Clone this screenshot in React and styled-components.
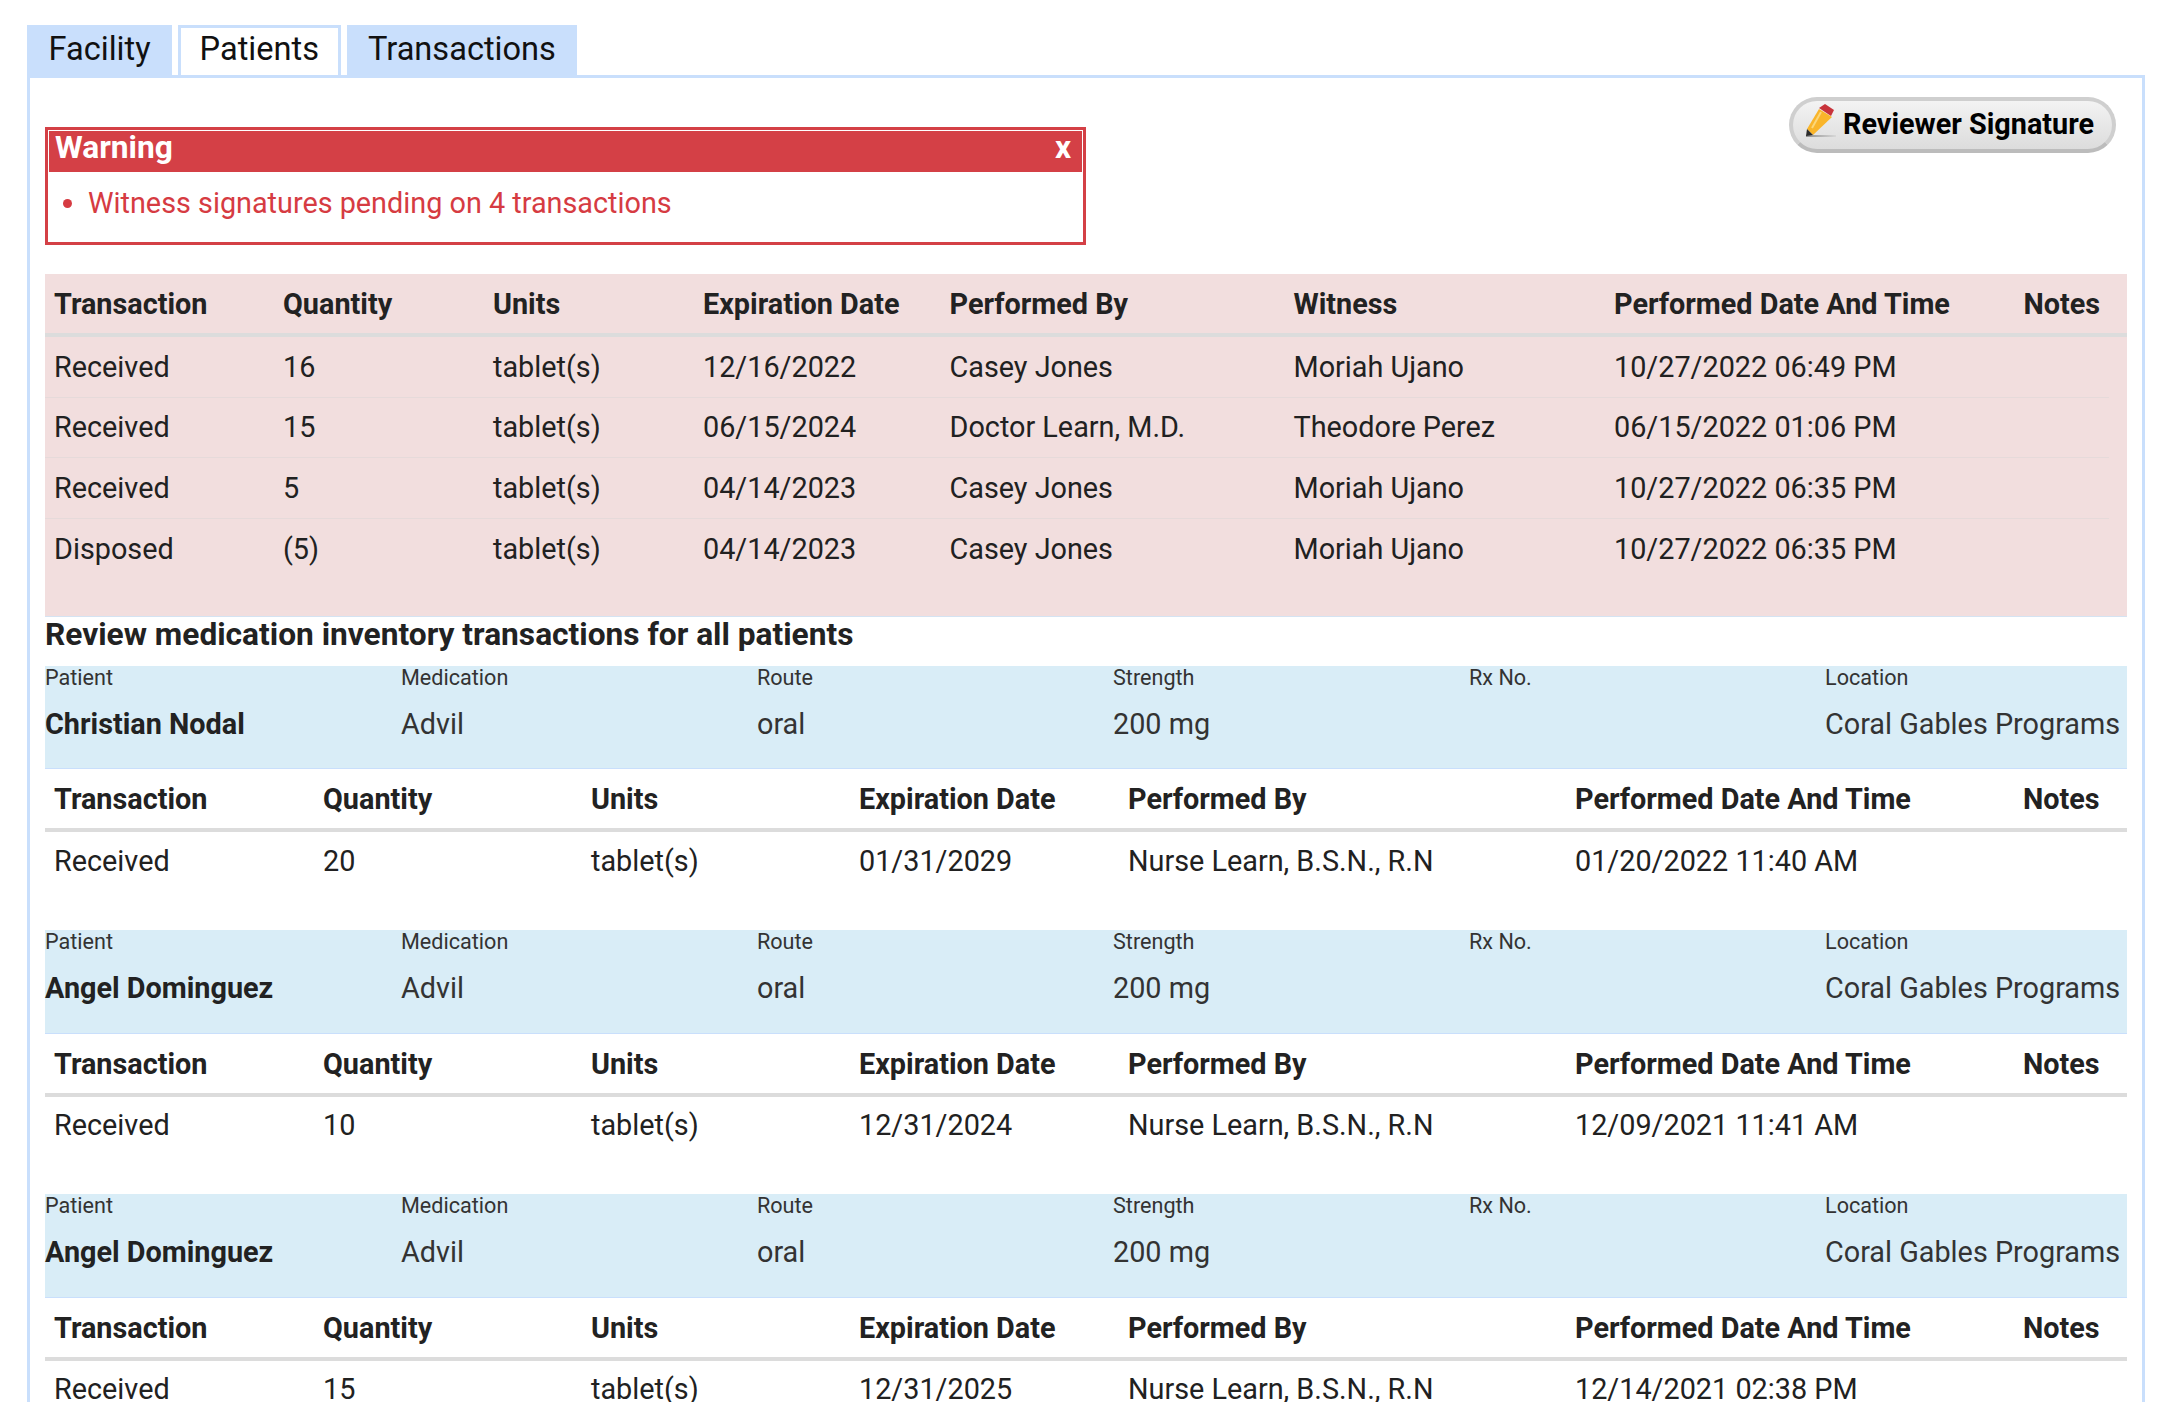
import React from 'react'
import styled, { createGlobalStyle } from 'styled-components'

const GlobalStyle = createGlobalStyle`
  html, body {
    margin: 0;
    height: 100%;
    overflow: hidden;
    background: #fff;
  }

  body {
    font-family: Roboto, "Liberation Sans", sans-serif;
    font-size: 28.8px;
    color: #212121;
  }
`

const pendingRows = [
  ['Received', '16', 'tablet(s)', '12/16/2022', 'Casey Jones', 'Moriah Ujano', '10/27/2022 06:49 PM', ''],
  ['Received', '15', 'tablet(s)', '06/15/2024', 'Doctor Learn, M.D.', 'Theodore Perez', '06/15/2022 01:06 PM', ''],
  ['Received', '5', 'tablet(s)', '04/14/2023', 'Casey Jones', 'Moriah Ujano', '10/27/2022 06:35 PM', ''],
  ['Disposed', '(5)', 'tablet(s)', '04/14/2023', 'Casey Jones', 'Moriah Ujano', '10/27/2022 06:35 PM', ''],
]

const pendingHeads = ['Transaction', 'Quantity', 'Units', 'Expiration Date', 'Performed By', 'Witness', 'Performed Date And Time', 'Notes']
const reviewHeads = ['Transaction', 'Quantity', 'Units', 'Expiration Date', 'Performed By', 'Performed Date And Time', 'Notes']

const reviews = [
  {
    patient: 'Christian Nodal',
    row: ['Received', '20', 'tablet(s)', '01/31/2029', 'Nurse Learn, B.S.N., R.N', '01/20/2022 11:40 AM', ''],
  },
  {
    patient: 'Angel Dominguez',
    row: ['Received', '10', 'tablet(s)', '12/31/2024', 'Nurse Learn, B.S.N., R.N', '12/09/2021 11:41 AM', ''],
  },
  {
    patient: 'Angel Dominguez',
    row: ['Received', '15', 'tablet(s)', '12/31/2025', 'Nurse Learn, B.S.N., R.N', '12/14/2021 02:38 PM', ''],
  },
]

function PencilIcon() {
  return (
    <svg width="38" height="40" viewBox="0 0 38 40">
      <defs>
        <linearGradient id="pencilLine" x1="0" x2="1" y1="0" y2="0">
          <stop offset="0" stopColor="#8f8f8f" />
          <stop offset="1" stopColor="#d8d8d8" />
        </linearGradient>
      </defs>
      <rect x="1" y="31" width="30" height="2" fill="url(#pencilLine)" />
      <path d="M14 5 L27 13 L8 31 L2 25 Z" fill="#f9b52b" />
      <path d="M16 8 L7 24" stroke="#fcd77a" strokeWidth="2" fill="none" />
      <path d="M2 25 L8 31 L1 32 Z" fill="#2b2b2b" />
      <path d="M14 4 L20 0 L29 6 L26 12 Z" fill="#c8333b" />
    </svg>
  )
}

function App() {
  return (
    <Page>
      <GlobalStyle />
      <Tabs>
        <Tab>Facility</Tab>
        <Tab $active>Patients</Tab>
        <Tab>Transactions</Tab>
      </Tabs>
      <Panel>
        <TopRow>
          <Warning>
            <WarningHead>
              <span>Warning</span>
              <span>x</span>
            </WarningHead>
            <WarningList>
              <li>Witness signatures pending on 4 transactions</li>
            </WarningList>
          </Warning>
          <SignButton>
            <PencilIcon />
            Reviewer Signature
          </SignButton>
        </TopRow>

        <PendingBox>
          <TableHead $cols={pendingCols}>
            {pendingHeads.map((h) => <span key={h}>{h}</span>)}
          </TableHead>
          {pendingRows.map((row, i) => (
            <PendingRow key={i} $cols={pendingCols}>
              {row.map((cell, j) => <span key={j}>{cell}</span>)}
            </PendingRow>
          ))}
        </PendingBox>

        <Title>Review medication inventory transactions for all patients</Title>

        {reviews.map((item, i) => (
          <Review key={i}>
            <InfoBar $first={i === 0}>
              <Label>Patient</Label>
              <Label>Medication</Label>
              <Label>Route</Label>
              <Label>Strength</Label>
              <Label>Rx No.</Label>
              <Label>Location</Label>
              <PatientName>{item.patient}</PatientName>
              <Value>Advil</Value>
              <Value>oral</Value>
              <Value>200 mg</Value>
              <Value />
              <Value>Coral Gables Programs</Value>
            </InfoBar>
            <TableHead $cols={reviewCols}>
              {reviewHeads.map((h) => <span key={h}>{h}</span>)}
            </TableHead>
            <ReviewRow $cols={reviewCols} $first={i === 0}>
              {item.row.map((cell, j) => <span key={j}>{cell}</span>)}
            </ReviewRow>
          </Review>
        ))}
      </Panel>
    </Page>
  )
}

export default App

const pendingCols = '229px 210px 210px 246.5px 344px 320.5px 409.5px 1fr'
const reviewCols = '269px 268px 268px 269px 447px 448px 1fr'

const Page = styled.div`
  display: flex;
  flex-direction: column;
  padding: 25px 13px 0 27px;
  height: 1402px;
  box-sizing: border-box;
`

const Tabs = styled.div`
  display: flex;
  gap: 6px;
  height: 50px;
  flex: none;
`

const Tab = styled.div`
  padding: 0 18.5px 5px;
  display: flex;
  align-items: center;
  font-size: 32.6px;
  color: #111;
  background: ${(p) => (p.$active ? '#fff' : '#c9dffc')};
  border: 3px solid #c9dffc;
  border-bottom: 0;
  box-sizing: border-box;
`

const Panel = styled.div`
  flex: 1;
  border: 3px solid #c9dffc;
  border-bottom: 0;
  padding: 19px 15px 0 15px;
  box-sizing: border-box;
`

const TopRow = styled.div`
  display: flex;
  justify-content: space-between;
  align-items: flex-start;
  padding-right: 11px;
`

const Warning = styled.div`
  margin-top: 30px;
  width: 1041px;
  height: 118px;
  border: 3px solid #d44046;
  padding: 1px;
  box-sizing: border-box;
`

const WarningHead = styled.div`
  display: flex;
  justify-content: space-between;
  align-items: center;
  height: 41px;
  padding: 0 11px 8px 6px;
  background: #d44046;
  color: #fff;
  font-size: 31.68px;
  font-weight: 700;
  box-sizing: border-box;
`

const WarningList = styled.ul`
  margin: 13px 0 0;
  padding: 0 0 0 39px;
  color: #d63b42;
  line-height: 36px;
`

const SignButton = styled.button`
  display: flex;
  align-items: center;
  gap: 0;
  width: 327px;
  height: 56px;
  padding: 0 0 3px 12px;
  border: 4px solid #cfcfcf;
  border-bottom-color: #bcbcbc;
  border-radius: 28px;
  background: linear-gradient(#f3f3f3, #dcdcdc);
  font-family: inherit;
  font-size: 28.8px;
  font-weight: 700;
  color: #000;
  box-sizing: border-box;
`

const PendingBox = styled.div`
  margin-top: 29px;
  height: 343px;
  background: #f2dede;
  border-bottom: 1px solid #d5e3f2;
  box-sizing: border-box;
`

const TableHead = styled.div`
  display: grid;
  grid-template-columns: ${(p) => p.$cols};
  align-items: center;
  height: 63px;
  padding-left: 9px;
  border-bottom: 4px solid #dcdcdc;
  box-sizing: border-box;
  font-weight: 700;
  color: #222;
`

const PendingRow = styled.div`
  display: grid;
  grid-template-columns: ${(p) => p.$cols};
  align-items: center;
  height: 60.6px;
  margin-right: 18px;
  padding-left: 9px;
  box-sizing: border-box;
  border-bottom: 1px solid #e6dada;
  &:last-child {
    border-bottom: 0;
  }
`

const Title = styled.h2`
  margin: 0;
  height: 49px;
  line-height: 36px;
  font-size: 31.68px;
  font-weight: 700;
  color: #222;
`

const Review = styled.section`
  height: 264px;
  &:last-child {
    height: auto;
  }
`

const InfoBar = styled.div`
  display: grid;
  grid-template-columns: repeat(5, 356px) 1fr;
  grid-template-rows: 24px 1fr;
  height: ${(p) => (p.$first ? '103px' : '104px')};
  background: #d9edf7;
  border-bottom: 1px solid #c9dffc;
  box-sizing: border-box;
`

const Label = styled.div`
  font-size: 21.6px;
  line-height: 24px;
  color: #333;
`

const Value = styled.div`
  padding-top: 17px;
  color: #333;
  white-space: nowrap;
`

const PatientName = styled(Value)`
  font-weight: 700;
  color: #222;
`

const ReviewRow = styled.div`
  display: grid;
  grid-template-columns: ${(p) => p.$cols};
  align-items: center;
  line-height: 28px;
  padding: ${(p) => (p.$first ? '15px' : '14px')} 0 0 9px;
  box-sizing: border-box;
`
